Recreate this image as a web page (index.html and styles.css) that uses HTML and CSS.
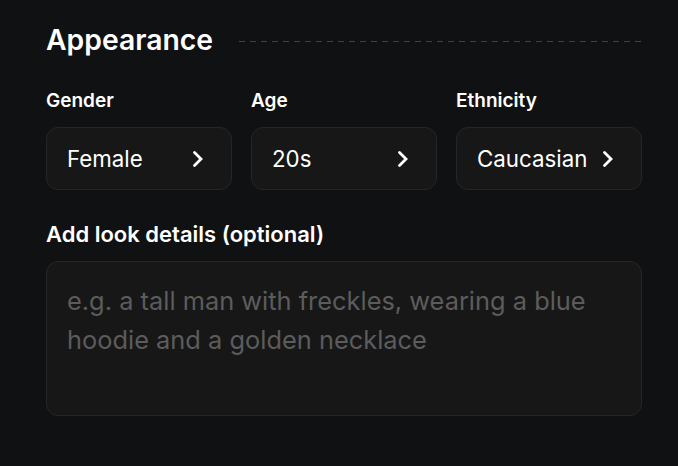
FILE: index.html
```html
<!DOCTYPE html>
<html>
<head>
<meta charset="utf-8">
<link rel="stylesheet" href="styles.css">
</head>
<body>
<div class="panel">
  <div class="header">
    <h2 class="title">Appearance</h2>
    <div class="dash"></div>
  </div>
  <div class="grid">
    <div class="field">
      <div class="label">Gender</div>
      <div class="select"><span>Female</span><svg class="chev" viewBox="0 0 12 18"><path d="M2.5 2.5l6.5 6.5-6.5 6.5" fill="none" stroke="#fff" stroke-width="2.8" stroke-linecap="round" stroke-linejoin="miter"/></svg></div>
    </div>
    <div class="field">
      <div class="label">Age</div>
      <div class="select"><span>20s</span><svg class="chev" viewBox="0 0 12 18"><path d="M2.5 2.5l6.5 6.5-6.5 6.5" fill="none" stroke="#fff" stroke-width="2.8" stroke-linecap="round" stroke-linejoin="miter"/></svg></div>
    </div>
    <div class="field">
      <div class="label">Ethnicity</div>
      <div class="select"><span>Caucasian</span><svg class="chev" viewBox="0 0 12 18"><path d="M2.5 2.5l6.5 6.5-6.5 6.5" fill="none" stroke="#fff" stroke-width="2.8" stroke-linecap="round" stroke-linejoin="miter"/></svg></div>
    </div>
  </div>
  <div class="details-label">Add look details (optional)</div>
  <div class="textarea"><span class="placeholder">e.g. a tall man with freckles, wearing a blue hoodie and a golden necklace</span></div>
</div>
</body>
</html>
```

FILE: styles.css
```css
html, body {
  margin: 0;
  padding: 0;
  background: #101113;
  width: 678px;
  height: 466px;
  overflow: hidden;
  font-family: Inter, "Noto Sans", sans-serif;
  color: #fff;
}
.panel {
  padding: 22px 36px 0 46px;
}
.header {
  display: flex;
  align-items: center;
  gap: 26px;
  height: 36px;
}
.title {
  margin: 0;
  font-size: 28.3px;
  font-weight: 600;
  line-height: 36px;
}
.dash {
  flex: 1;
  height: 1px;
  margin-top: 2px;
  background: repeating-linear-gradient(90deg, #3a3f55 0 6px, transparent 6px 11px);
}
.grid {
  display: grid;
  grid-template-columns: repeat(3, 1fr);
  column-gap: 19px;
  margin-top: 31px;
}
.label {
  font-size: 19px;
  font-weight: 600;
  line-height: 24px;
}
.select {
  margin-top: 14px;
  height: 61px;
  border: 1px solid #262626;
  border-radius: 12px;
  background: #171717;
  display: flex;
  align-items: center;
  justify-content: space-between;
  padding: 0 27px 0 20px;
  font-size: 22.3px;
  font-weight: 400;
}
.chev {
  width: 12px;
  height: 18px;
}
.details-label {
  margin-top: 31px;
  font-size: 22px;
  font-weight: 600;
  line-height: 26px;
}
.textarea {
  margin-top: 14px;
  height: 134px;
  border: 1px solid #262626;
  border-radius: 12px;
  background: #171717;
  padding: 19px 20px 0 20px;
  font-size: 25.4px;
  line-height: 39px;
  color: #5c5c5c;
}
```
